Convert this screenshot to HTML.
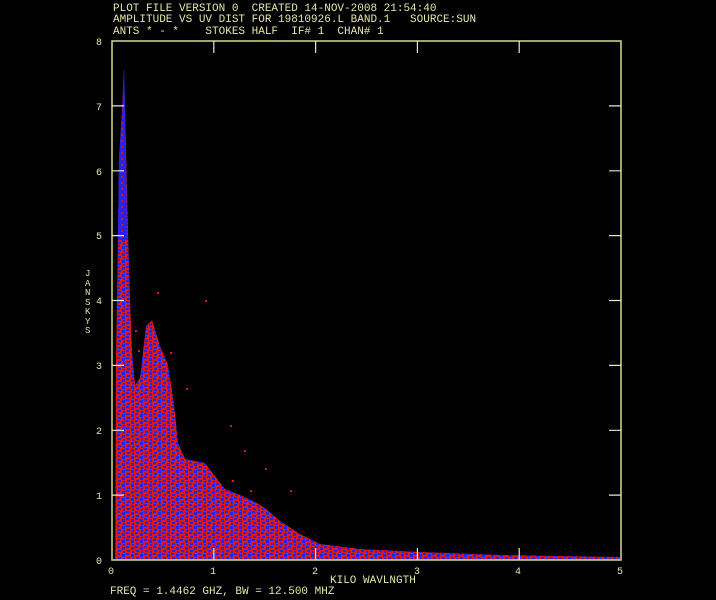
<!DOCTYPE html>
<html><head><style>
html,body{margin:0;padding:0;background:#000;width:716px;height:600px;overflow:hidden}
.t{position:absolute;font-family:"Liberation Mono",monospace;font-size:11px;color:#e6e6a8;white-space:pre;line-height:11px}
svg{position:absolute;left:0;top:0}
</style></head><body>
<svg width="716" height="600" viewBox="0 0 716 600">
<defs>
<pattern id="p" width="9" height="7" patternUnits="userSpaceOnUse">
<rect width="9" height="7" fill="#d81a1a"/>
<rect x="0" y="0" width="3" height="2" fill="#2a22e8"/>
<rect x="5" y="1" width="3" height="3" fill="#2a22e8"/>
<rect x="1" y="4" width="3" height="2" fill="#2a22e8"/>
<rect x="6" y="5" width="2" height="2" fill="#2a22e8"/>
</pattern>
<pattern id="q" width="6" height="6" patternUnits="userSpaceOnUse">
<rect width="6" height="6" fill="#2a22e8"/>
<rect x="1" y="2" width="2" height="2" fill="#c81a1a"/>
</pattern>
</defs>
<polygon fill="url(#p)" points="115,560 116,360 117,300 119,158 122,112 124,67 126,150 128,230 130,300 132,350 135,385 140,378 146,326 152,320 160,346 168,365 174,404 178,443 185,459 205,463 215,476 225,489 240,495 255,502 265,508 280,521 300,534 320,544 360,549 420,552 500,555 620,557 620,560"/>
<polygon fill="url(#q)" points="118,240 119,158 122,112 124,67 126,150 127,240"/>
<g fill="#d81a1a">
<rect x="205" y="300" width="2" height="2"/><rect x="157" y="292" width="2" height="2"/>
<rect x="186" y="388" width="2" height="2"/><rect x="230" y="425" width="2" height="2"/>
<rect x="244" y="450" width="2" height="2"/><rect x="265" y="468" width="2" height="2"/>
<rect x="290" y="490" width="2" height="2"/><rect x="170" y="352" width="2" height="2"/>
<rect x="135" y="330" width="2" height="2"/><rect x="138" y="350" width="2" height="2"/>
<rect x="250" y="490" width="2" height="2"/><rect x="232" y="480" width="2" height="2"/>
</g>
<rect x="112" y="41" width="509" height="519" fill="none" stroke="#d8d890" stroke-width="1.5"/>
<g stroke="#e8e8d0" stroke-width="1.2">
<path d="M213.8,560v-12M315.6,560v-12M417.4,560v-12M519.2,560v-12M213.8,41v12M315.6,41v12M417.4,41v12M519.2,41v12"/>
<path d="M112,495.1h12M112,430.3h12M112,365.4h12M112,300.5h12M112,235.6h12M112,170.8h12M112,105.9h12M621,495.1h-12M621,430.3h-12M621,365.4h-12M621,300.5h-12M621,235.6h-12M621,170.8h-12M621,105.9h-12"/>
</g>
<g fill="#e6e6a8" font-family="Liberation Mono, monospace" font-size="10">
<text x="96" y="564">0</text><text x="96" y="499">1</text><text x="96" y="434">2</text><text x="96" y="369">3</text><text x="96" y="304">4</text><text x="96" y="239">5</text><text x="96" y="175">6</text><text x="96" y="110">7</text><text x="96" y="45">8</text>
<text x="108" y="574">0</text><text x="210" y="574">1</text><text x="312" y="574">2</text><text x="414" y="574">3</text><text x="515" y="574">4</text><text x="617" y="574">5</text>
</g>
</svg>
<div class="t" style="left:113px;top:4px">PLOT FILE VERSION 0  CREATED 14-NOV-2008 21:54:40</div>
<div class="t" style="left:113px;top:15px">AMPLITUDE VS UV DIST FOR 19810926.L BAND.1   SOURCE:SUN</div>
<div class="t" style="left:113px;top:27px">ANTS * - *    STOKES HALF  IF# 1  CHAN# 1</div>
<div class="t" style="left:330px;top:576px">KILO WAVLNGTH</div>
<div class="t" style="left:110px;top:587px">FREQ = 1.4462 GHZ, BW = 12.500 MHZ</div>
<div class="t" style="left:85px;top:270px;line-height:9.5px;font-size:9px">J<br>A<br>N<br>S<br>K<br>Y<br>S</div>
</body></html>
